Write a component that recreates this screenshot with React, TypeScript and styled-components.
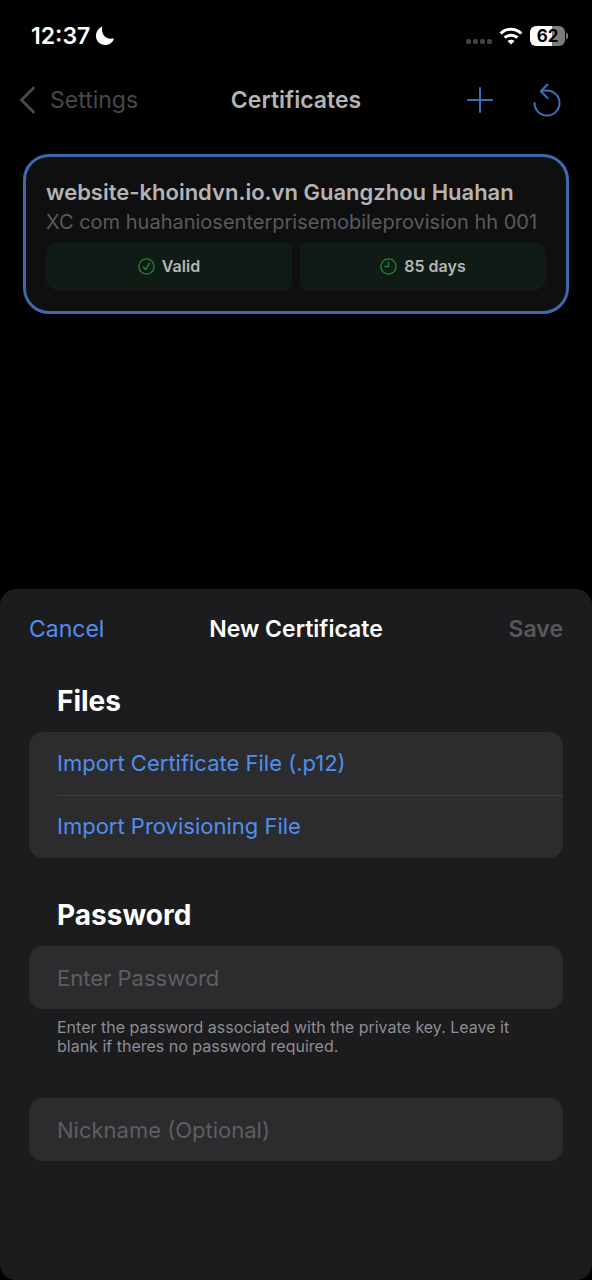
import React, { useState } from "react";
import styled, { createGlobalStyle } from "styled-components";

const GlobalStyle = createGlobalStyle`
  * { box-sizing: border-box; }
  body {
    margin: 0;
    background: #000;
    color: #fff;
    font-family: Inter, "Liberation Sans", sans-serif;
  }
  button, input { font: inherit; }
`;

const Screen = styled.div`
  display: flex;
  flex-direction: column;
  min-height: 100vh;
`;

const StatusBar = styled.div`
  display: flex;
  align-items: center;
  justify-content: space-between;
  height: 72px;
  padding: 0 24px 0 31px;
`;

const StatusGroup = styled.div<{ $gap: number }>`
  display: flex;
  align-items: center;
  gap: ${(p) => p.$gap}px;
`;

const Clock = styled.span`
  font-size: 23px;
  line-height: 28px;
  font-weight: 600;
`;

const Battery = styled.span`
  display: flex;
  align-items: center;
  gap: 1px;
`;

const BatteryBody = styled.span`
  width: 35px;
  border-radius: 6px;
  background: linear-gradient(to right, #fff 62%, #7c7c7c 62%);
  color: #000;
  font-size: 17px;
  line-height: 20px;
  font-weight: 700;
  text-align: center;
`;

const BatteryTip = styled.span`
  width: 2px;
  height: 6px;
  border-radius: 0 2px 2px 0;
  background: #7c7c7c;
`;

const NavBar = styled.header`
  display: grid;
  grid-template-columns: 1fr auto 1fr;
  align-items: center;
  height: 56px;
  padding: 0 19px;
`;

const BackLink = styled.a`
  display: flex;
  align-items: center;
  gap: 13px;
  color: #48484a;
  font-size: 23px;
  line-height: 32px;
  text-decoration: none;
`;

const NavTitle = styled.h1`
  margin: 0;
  color: #b4b4b6;
  font-size: 23px;
  line-height: 32px;
  font-weight: 600;
`;

const NavActions = styled.div`
  display: flex;
  align-items: center;
  justify-content: flex-end;
  gap: 39px;
  padding-right: 11px;
`;

const IconButton = styled.button`
  display: flex;
  padding: 0;
  border: 0;
  background: none;
  color: #3d70b8;
  cursor: pointer;
`;

const CertificateList = styled.main`
  flex: 1;
  padding: 26px 23px 48px;
`;

const CertificateCard = styled.article`
  padding: 20px 20px 21px;
  border: 3px solid #3e69ac;
  border-radius: 26px;
  background: #0f0f10;
`;

const CertificateName = styled.h2`
  margin: 0;
  color: #b4b4b6;
  font-size: 22px;
  line-height: 30px;
  font-weight: 600;
`;

const CertificateDetail = styled.p`
  margin: 0 0 5px;
  color: #5a5a5f;
  font-size: 20px;
  line-height: 30px;
`;

const BadgeRow = styled.div`
  display: grid;
  grid-template-columns: 1fr 1fr;
  gap: 8px;
`;

const Badge = styled.div`
  display: flex;
  align-items: center;
  justify-content: center;
  gap: 7px;
  height: 48px;
  border-radius: 6px;
  background: #111b15;
  color: #b4b4b6;
  font-size: 16px;
  line-height: 20px;
  font-weight: 600;

  &:first-child { border-radius: 12px 6px 6px 12px; }
  &:last-child { border-radius: 6px 12px 12px 6px; }

  svg { color: #1f8a3a; }
`;

const Sheet = styled.form`
  padding: 0 29px 119px;
  border-radius: 16px;
  background: #1c1c1e;
`;

const SheetHeader = styled.header`
  display: grid;
  grid-template-columns: 1fr auto 1fr;
  align-items: center;
  height: 80px;
  margin-bottom: 12px;
`;

const SheetTitle = styled.h2`
  margin: 0;
  font-size: 23px;
  line-height: 32px;
  font-weight: 600;
`;

const TextButton = styled.button<{ $end?: boolean }>`
  justify-self: ${(p) => (p.$end ? "end" : "start")};
  padding: 0;
  border: 0;
  background: none;
  color: #4f8fee;
  font-size: 23px;
  line-height: 32px;
  font-weight: ${(p) => (p.$end ? 600 : 400)};
  cursor: pointer;

  &:disabled { color: #58585b; cursor: default; }
`;

const Section = styled.section`
  margin-bottom: 37px;
`;

const SectionTitle = styled.h3`
  margin: 0;
  padding: 0 28px 11px;
  font-size: 28px;
  line-height: 40px;
  font-weight: 700;
`;

const Group = styled.div`
  overflow: hidden;
  border-radius: 14px;
  background: #2c2c2e;
`;

const GroupButton = styled.button`
  display: block;
  width: 100%;
  padding: 0 0 0 28px;
  border: 0;
  background: none;
  color: #4f8fee;
  font-size: 22px;
  line-height: 63px;
  text-align: left;
  cursor: pointer;

  & + & {
    background: linear-gradient(#3d3d41, #3d3d41) 28px 0 / 100% 1px no-repeat;
  }
`;

const Field = styled.input`
  display: block;
  width: 100%;
  height: 63px;
  padding: 0 28px;
  border: 0;
  border-radius: 14px;
  outline: 0;
  background: #2c2c2e;
  color: #fff;
  font-size: 22px;

  &::placeholder { color: #5e5e62; opacity: 1; }
`;

const Footnote = styled.p`
  margin: 0;
  padding: 9px 28px 5px;
  color: #8d8d93;
  font-size: 16px;
  line-height: 19px;
`;

const Moon = () => (
  <svg width="20" height="20" viewBox="0 0 20 20" fill="#fff" aria-hidden="true">
    <path d="M7.2 1.2C6 6.900 9.600 13.400 17.200 12.600C18.300 12.400 19.200 12.300 18.700 13.500C17.200 16.900 14 19 10.200 19C5 19 1 15.200 1 10C1 6 3.300 2.700 6.200 1C7 .6 7.300 .7 7.200 1.200Z" />
  </svg>
);

const SignalDots = () => (
  <svg width="27" height="18" viewBox="0 0 27 18" fill="#444446" aria-hidden="true">
    {[1, 8, 15, 22].map((x) => (
      <rect key={x} x={x} y="12" width="5" height="5" rx="2" />
    ))}
  </svg>
);

const Wifi = () => (
  <svg width="24" height="18" viewBox="0 0 24 18" fill="none" stroke="#fff" strokeWidth="3" aria-hidden="true">
    <path d="M1.600 6.500C7.400 .8 16.600 .8 22.400 6.500" />
    <path d="M5.600 10.700C9.200 7.300 14.800 7.300 18.400 10.700" />
    <path d="M12 17.500L8.500 14C10.400 12.300 13.600 12.300 15.500 14Z" fill="#fff" stroke="none" />
  </svg>
);

const ChevronBack = () => (
  <svg width="18" height="28" viewBox="0 0 18 28" fill="none" stroke="currentColor" strokeWidth="3" strokeLinecap="round" strokeLinejoin="round" aria-hidden="true">
    <path d="M14.500 2L2.500 14L14.500 26" />
  </svg>
);

const Plus = () => (
  <svg width="26" height="26" viewBox="0 0 26 26" fill="none" stroke="currentColor" strokeWidth="2" strokeLinecap="round" aria-hidden="true">
    <path d="M13 1V25M1 13H25" />
  </svg>
);

const Reset = () => (
  <svg width="30" height="34" viewBox="0 0 30 34" fill="none" stroke="currentColor" strokeWidth="2" strokeLinecap="round" strokeLinejoin="round" aria-hidden="true">
    <path d="M2.500 20A12.500 12.500 0 1 0 15 7.500Q12 7.300 9 8.200" />
    <path d="M15.500 1.500L8.800 8.300L15.500 15" />
  </svg>
);

const CheckCircle = () => (
  <svg width="17" height="17" viewBox="0 0 17 17" fill="none" stroke="currentColor" strokeWidth="1.300" strokeLinecap="round" strokeLinejoin="round" aria-hidden="true">
    <circle cx="8.500" cy="8.500" r="7.600" />
    <path d="M5.300 9L7.500 11.600L11.500 5.400" />
  </svg>
);

const ClockCircle = () => (
  <svg width="17" height="17" viewBox="0 0 17 17" fill="none" stroke="currentColor" strokeWidth="1.300" strokeLinecap="round" strokeLinejoin="round" aria-hidden="true">
    <circle cx="8.500" cy="8.500" r="7.600" />
    <path d="M8.500 3.800V8.600H4.800" />
  </svg>
);

export default function App() {
  const [password, setPassword] = useState("");
  const [nickname, setNickname] = useState("");

  return (
    <>
      <GlobalStyle />
      <Screen>
        <StatusBar>
          <StatusGroup $gap={5}>
            <Clock>12:37</Clock>
            <Moon />
          </StatusGroup>
          <StatusGroup $gap={7}>
            <SignalDots />
            <Wifi />
            <Battery>
              <BatteryBody>62</BatteryBody>
              <BatteryTip />
            </Battery>
          </StatusGroup>
        </StatusBar>

        <NavBar>
          <BackLink href="#settings">
            <ChevronBack />
            Settings
          </BackLink>
          <NavTitle>Certificates</NavTitle>
          <NavActions>
            <IconButton type="button" aria-label="Add certificate">
              <Plus />
            </IconButton>
            <IconButton type="button" aria-label="Refresh">
              <Reset />
            </IconButton>
          </NavActions>
        </NavBar>

        <CertificateList>
          <CertificateCard>
            <CertificateName>website-khoindvn.io.vn Guangzhou Huahan</CertificateName>
            <CertificateDetail>XC com huahaniosenterprisemobileprovision hh 001</CertificateDetail>
            <BadgeRow>
              <Badge>
                <CheckCircle />
                Valid
              </Badge>
              <Badge>
                <ClockCircle />
                85 days
              </Badge>
            </BadgeRow>
          </CertificateCard>
        </CertificateList>

        <Sheet onSubmit={(e) => e.preventDefault()}>
          <SheetHeader>
            <TextButton type="button">Cancel</TextButton>
            <SheetTitle>New Certificate</SheetTitle>
            <TextButton type="submit" $end disabled>
              Save
            </TextButton>
          </SheetHeader>

          <Section>
            <SectionTitle>Files</SectionTitle>
            <Group>
              <GroupButton type="button">Import Certificate File (.p12)</GroupButton>
              <GroupButton type="button">Import Provisioning File</GroupButton>
            </Group>
          </Section>

          <Section>
            <SectionTitle>
              <label htmlFor="password">Password</label>
            </SectionTitle>
            <Field
              id="password"
              type="password"
              placeholder="Enter Password"
              aria-describedby="password-note"
              value={password}
              onChange={(e) => setPassword(e.target.value)}
            />
            <Footnote id="password-note">
              Enter the password associated with the private key. Leave it blank if theres no password required.
            </Footnote>
          </Section>

          <Field
            type="text"
            aria-label="Nickname"
            placeholder="Nickname (Optional)"
            value={nickname}
            onChange={(e) => setNickname(e.target.value)}
          />
        </Sheet>
      </Screen>
    </>
  );
}
